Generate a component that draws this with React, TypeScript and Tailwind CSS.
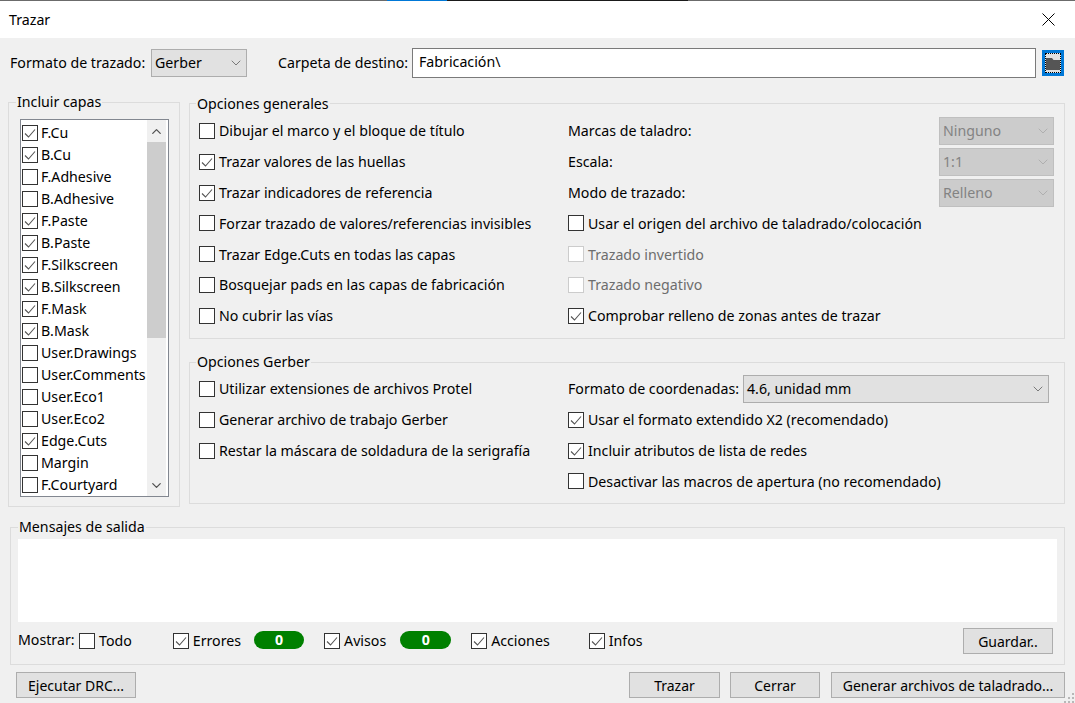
import { ChevronDown, ChevronUp } from 'lucide-react';

const layers = [
  { name: 'F.Cu', on: true },
  { name: 'B.Cu', on: true },
  { name: 'F.Adhesive', on: false },
  { name: 'B.Adhesive', on: false },
  { name: 'F.Paste', on: true },
  { name: 'B.Paste', on: true },
  { name: 'F.Silkscreen', on: true },
  { name: 'B.Silkscreen', on: true },
  { name: 'F.Mask', on: true },
  { name: 'B.Mask', on: true },
  { name: 'User.Drawings', on: false },
  { name: 'User.Comments', on: false },
  { name: 'User.Eco1', on: false },
  { name: 'User.Eco2', on: false },
  { name: 'Edge.Cuts', on: true },
  { name: 'Margin', on: false },
  { name: 'F.Courtyard', on: false },
];

const generalLeft = [
  { label: 'Dibujar el marco y el bloque de título', on: false },
  { label: 'Trazar valores de las huellas', on: true },
  { label: 'Trazar indicadores de referencia', on: true },
  { label: 'Forzar trazado de valores/referencias invisibles', on: false },
  { label: 'Trazar Edge.Cuts en todas las capas', on: false },
  { label: 'Bosquejar pads en las capas de fabricación', on: false },
  { label: 'No cubrir las vías', on: false },
];

const gerberLeft = [
  { label: 'Utilizar extensiones de archivos Protel', on: false },
  { label: 'Generar archivo de trabajo Gerber', on: false },
  { label: 'Restar la máscara de soldadura de la serigrafía', on: false },
];

function Box({ on = false, disabled = false }: { on?: boolean; disabled?: boolean }) {
  return (
    <span
      className={`flex w-4 h-4 shrink-0 items-center justify-center border bg-white ${
        disabled ? 'border-[#cccccc]' : 'border-[#333333]'
      }`}
    >
      {on && (
        <svg width="14" height="14" viewBox="0 0 14 14" fill="none">
          <path d="M2 7.5 L5.5 11 L12 3.5" stroke="#555555" strokeWidth="1.1" />
        </svg>
      )}
    </span>
  );
}

function Check({ label, on, disabled }: { label: string; on?: boolean; disabled?: boolean }) {
  return (
    <div className={`flex items-center gap-[4px] ${disabled ? 'text-[#6d6d6d]' : ''}`}>
      <Box on={on} disabled={disabled} />
      <span className="whitespace-nowrap">{label}</span>
    </div>
  );
}

function Select({ value, className }: { value: string; className: string }) {
  return (
    <div className={`flex h-[28px] items-center justify-between border border-[#adadad] bg-[#e1e1e1] pl-[3px] pr-[2px] ${className}`}>
      <span className="whitespace-nowrap">{value}</span>
      <ChevronDown size={16} strokeWidth={1} color="#444444" />
    </div>
  );
}

function DisabledSelect({ value }: { value: string }) {
  return (
    <div className="flex h-[28px] w-[115px] items-center justify-between border border-[#bfbfbf] bg-[#cccccc] pl-[3px] pr-[2px] text-[#838383]">
      <span>{value}</span>
      <ChevronDown size={16} strokeWidth={1} color="#a0a0a0" />
    </div>
  );
}

function Button({ label, className }: { label: string; className: string }) {
  return (
    <div className={`flex items-center justify-center border border-[#adadad] bg-[#e1e1e1] text-[14px] whitespace-nowrap ${className}`}>
      {label}
    </div>
  );
}

function Group({ title, titleClass, className, children }: { title: string; titleClass: string; className: string; children: React.ReactNode }) {
  return (
    <div className={`relative border border-[#dcdcdc] ${className}`}>
      <span className={`absolute bg-[#f0f0f0] px-[1px] leading-[20px] whitespace-nowrap ${titleClass}`}>{title}</span>
      {children}
    </div>
  );
}

function Row({ children }: { children: React.ReactNode }) {
  return <div className="flex h-[30.83px] items-center">{children}</div>;
}

function Pill({ className }: { className: string }) {
  return (
    <span className={`flex h-[18px] -translate-y-[1px] items-center justify-center rounded-full bg-[#008000] font-bold leading-none text-white ${className}`}>
      0
    </span>
  );
}

export default function App() {
  return (
    <div
      className="relative flex h-[703px] w-[1075px] flex-col overflow-hidden bg-[#f0f0f0] text-[14.2px] text-black"
      style={{ fontFamily: '"Noto Sans", "Open Sans", sans-serif' }}
    >
      {/* window title */}
      <div className="flex h-[38px] shrink-0 flex-col bg-white">
        <div className="flex h-[1px] shrink-0">
          <div className="w-[387px] bg-[#6b6b6b]" />
          <div className="w-[60px] bg-[#0078d7]" />
          <div className="w-[241px] bg-[#1a1a1a]" />
          <div className="flex-1 bg-[#6b6b6b]" />
        </div>
        <div className="flex flex-1 items-center justify-between pl-[9px] pr-[20px]">
          <span>Trazar</span>
          <svg width="13" height="13" viewBox="0 0 13 13" stroke="#000000" strokeWidth="1">
            <path d="M0.5 0.5 L12.5 12.5 M12.5 0.5 L0.5 12.5" />
          </svg>
        </div>
      </div>

      {/* format and output folder */}
      <div className="mt-[10px] flex h-[30px] shrink-0 items-center pl-[10px]">
        <span className="w-[141px] whitespace-nowrap">Formato de trazado:</span>
        <Select value="Gerber" className="w-[96px]" />
        <span className="ml-[31px] w-[134px] whitespace-nowrap">Carpeta de destino:</span>
        <div className="flex h-[30px] w-[624px] items-center border border-[#7a7a7a] bg-white pb-[2px] pl-[6px]">
          Fabricación\
        </div>
        <div className="ml-[6px] flex h-[26px] w-[22px] items-center justify-center border-[3px] border-[#0078d7] bg-[#e1e1e1]">
          <div className="flex h-[20px] w-[16px] items-center justify-center border border-dotted border-black">
            <svg width="14" height="13" viewBox="0 0 14 13">
              <path d="M0 1 H6 L7.5 3 H14 V13 H0 Z" fill="#555555" />
            </svg>
          </div>
        </div>
      </div>

      <div className="mt-[24px] flex h-[405px] shrink-0 items-start pl-[8px]">
        {/* layers */}
        <Group title="Incluir capas" titleClass="-top-[11px] left-[7px]" className="h-[405px] w-[172px] pl-[11px] pt-[16px]">
          <div className="flex h-[378px] w-[149px] justify-between border border-[#828790] bg-white pr-[2px]">
            <div className="overflow-hidden pl-[1px] pt-[2px]">
              {layers.map((layer) => (
                <div key={layer.name} className="flex h-[22px] items-center gap-[3px]">
                  <Box on={layer.on} />
                  <span className="whitespace-nowrap">{layer.name}</span>
                </div>
              ))}
            </div>
            <div className="flex w-[19px] shrink-0 flex-col bg-[#f0f0f0]">
              <div className="flex h-[22px] items-center justify-center">
                <ChevronUp size={15} strokeWidth={2} color="#505050" />
              </div>
              <div className="h-[196px] bg-[#cdcdcd]" />
              <div className="flex-1" />
              <div className="flex h-[21px] items-center justify-center">
                <ChevronDown size={15} strokeWidth={2} color="#505050" />
              </div>
            </div>
          </div>
        </Group>

        <div className="ml-[9px] flex w-[876px] flex-col">
          {/* general options */}
          <Group title="Opciones generales" titleClass="-top-[10px] left-[6px]" className="mt-[1px] h-[236px]">
            <div className="flex pl-[9px] pt-[11.5px]">
              <div className="w-[369px]">
                {generalLeft.map((item) => (
                  <Row key={item.label}>
                    <Check label={item.label} on={item.on} />
                  </Row>
                ))}
              </div>
              <div className="w-[486px]">
                <Row>
                  <div className="flex w-full items-center justify-between">
                    <span>Marcas de taladro:</span>
                    <DisabledSelect value="Ninguno" />
                  </div>
                </Row>
                <Row>
                  <div className="flex w-full items-center justify-between">
                    <span>Escala:</span>
                    <DisabledSelect value="1:1" />
                  </div>
                </Row>
                <Row>
                  <div className="flex w-full items-center justify-between">
                    <span>Modo de trazado:</span>
                    <DisabledSelect value="Relleno" />
                  </div>
                </Row>
                <Row>
                  <Check label="Usar el origen del archivo de taladrado/colocación" />
                </Row>
                <Row>
                  <Check label="Trazado invertido" disabled />
                </Row>
                <Row>
                  <Check label="Trazado negativo" disabled />
                </Row>
                <Row>
                  <Check label="Comprobar relleno de zonas antes de trazar" on />
                </Row>
              </div>
            </div>
          </Group>

          {/* gerber options */}
          <Group title="Opciones Gerber" titleClass="-top-[11px] left-[6px]" className="mt-[23px] h-[142px]">
            <div className="flex pl-[9px] pt-[10.5px]">
              <div className="w-[369px]">
                {gerberLeft.map((item) => (
                  <Row key={item.label}>
                    <Check label={item.label} on={item.on} />
                  </Row>
                ))}
              </div>
              <div className="w-[481px]">
                <Row>
                  <span className="w-[175px] whitespace-nowrap">Formato de coordenadas:</span>
                  <Select value="4.6, unidad mm" className="w-[306px]" />
                </Row>
                <Row>
                  <Check label="Usar el formato extendido X2 (recomendado)" on />
                </Row>
                <Row>
                  <Check label="Incluir atributos de lista de redes" on />
                </Row>
                <Row>
                  <Check label="Desactivar las macros de apertura (no recomendado)" />
                </Row>
              </div>
            </div>
          </Group>
        </div>
      </div>

      {/* output messages */}
      <div className="ml-[10px] mt-[20px] shrink-0">
        <Group title="Mensajes de salida" titleClass="-top-[11px] left-[7px]" className="h-[138px] w-[1055px] pl-[7px] pr-[7px] pt-[11px]">
          <div className="h-[83px] bg-white" />
          <div className="mt-[6px] flex h-[26px] items-center">
            <span className="w-[61px] -translate-y-[1px] whitespace-nowrap">Mostrar:</span>
            <Check label="Todo" />
            <div className="ml-[41px]">
              <Check label="Errores" on />
            </div>
            <Pill className="ml-[13px] w-[50px]" />
            <div className="ml-[20px]">
              <Check label="Avisos" on />
            </div>
            <Pill className="ml-[14px] w-[51px]" />
            <div className="ml-[20px]">
              <Check label="Acciones" on />
            </div>
            <div className="ml-[39px]">
              <Check label="Infos" on />
            </div>
            <Button label="Guardar.." className="ml-auto mr-[4px] h-[26px] w-[90px]" />
          </div>
        </Group>
      </div>

      {/* dialog buttons */}
      <div className="mt-[7px] flex h-[26px] shrink-0 pl-[16px]">
        <Button label="Ejecutar DRC..." className="w-[120px]" />
        <Button label="Trazar" className="ml-[493px] w-[91px]" />
        <Button label="Cerrar" className="ml-[10px] w-[90px]" />
        <Button label="Generar archivos de taladrado..." className="ml-[11px] w-[234px]" />
      </div>

      {/* resize grip */}
      <svg className="absolute bottom-0 right-0" width="11" height="11" viewBox="0 0 11 11" fill="#b8b8b8">
        <rect x="8" y="1" width="2" height="2" />
        <rect x="4" y="5" width="2" height="2" />
        <rect x="8" y="5" width="2" height="2" />
        <rect x="0" y="9" width="2" height="2" />
        <rect x="4" y="9" width="2" height="2" />
        <rect x="8" y="9" width="2" height="2" />
      </svg>
    </div>
  );
}
